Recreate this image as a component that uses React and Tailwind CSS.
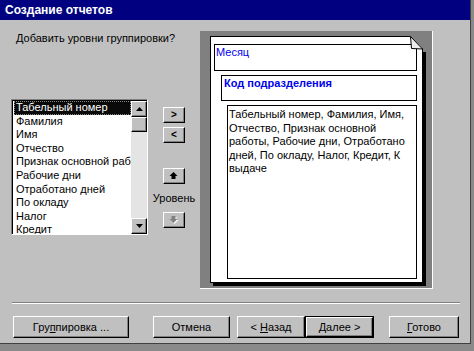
import React from 'react';

const items = [
  'Табельный номер',
  'Фамилия',
  'Имя',
  'Отчество',
  'Признак основной работы',
  'Рабочие дни',
  'Отработано дней',
  'По окладу',
  'Налог',
  'Кредит',
];

const bevel =
  'bg-[#c0c0c0] border border-t-white border-l-white border-r-black border-b-black shadow-[inset_-1px_-1px_0_#808080]';

function SmallButton({ children }) {
  return (
    <div className={`w-[22px] h-[16px] flex items-center justify-center ${bevel}`}>
      {children}
    </div>
  );
}

function Arrow({ up, disabled }) {
  return (
    <svg width="10" height="9" viewBox="0 0 10 9">
      {disabled && (
        <polygon points="5.5,8 9.5,4 7.5,4 7.5,1 3.5,1 3.5,4 1.5,4" fill="#ffffff" />
      )}
      <polygon
        points={up ? '4.5,0 8.5,4 6.5,4 6.5,7 2.5,7 2.5,4 0.5,4' : '4.5,7 8.5,3 6.5,3 6.5,0 2.5,0 2.5,3 0.5,3'}
        fill={disabled ? '#808080' : '#000000'}
      />
    </svg>
  );
}

function ScrollArrow({ up }) {
  return (
    <div className={`w-[16px] h-[16px] flex items-center justify-center ${bevel}`}>
      <svg width="7" height="4" viewBox="0 0 7 4">
        <polygon points={up ? '3.5,0 7,4 0,4' : '0,0 7,0 3.5,4'} fill="#000" />
      </svg>
    </div>
  );
}

function Button({ children, className = '', isDefault }) {
  if (isDefault) {
    return (
      <div className={`h-[22px] border border-black ${className}`}>
        <div className={`h-full flex items-center justify-center ${bevel}`}>{children}</div>
      </div>
    );
  }
  return (
    <div className={`h-[22px] flex items-center justify-center ${bevel} ${className}`}>{children}</div>
  );
}

export default function App() {
  return (
    <div
      className="w-[474px] h-[351px] bg-[#8a8a8a] overflow-hidden text-[11px] text-black"
      style={{ fontFamily: '"Liberation Sans", Arial, sans-serif' }}
    >
      <div className="w-[471px] h-[344px] bg-[#c0c0c0] border-r border-b border-r-[#404040] border-b-[#404040] flex flex-col">
        <div className="h-[20px] bg-[#000080] text-white font-bold text-[12px] pl-[5px] flex items-center">
          Создание отчетов
        </div>

        <div className="flex pt-[11px]">
          <div className="w-[200px] pl-[11px] flex flex-col">
            <div className="ml-[5px] h-[14px] leading-[14px]">Добавить уровни группировки?</div>

            <div className="flex mt-[54px]">
              <div className="w-[137px] h-[136px] flex border border-t-[#808080] border-l-[#808080] border-r-white border-b-white">
                <div className="flex flex-1 min-w-0 overflow-hidden shadow-[inset_1px_1px_0_#000] pt-[1px] pl-[1px]">
                  <div className="flex-1 min-w-0 bg-white overflow-hidden pl-[1px]">
                    {items.map((t, i) => (
                      <div
                        key={t}
                        className={`h-[13.6px] leading-[13.6px] whitespace-nowrap pl-[2px] ${
                          i === 0 ? 'bg-[#0a0a0a] text-white outline-dotted outline-1 outline-[#888] -outline-offset-1' : ''
                        }`}
                      >
                        {t}
                      </div>
                    ))}
                  </div>
                  <div className="w-[16px] shrink-0 flex flex-col bg-[#e4e4e4]">
                    <ScrollArrow up />
                    <div className={`w-[16px] h-[15px] ${bevel}`} />
                    <div className="flex-1" />
                    <ScrollArrow />
                  </div>
                </div>
              </div>

              <div className="w-[44px] ml-[4px] flex flex-col items-center">
                <div className="mt-[8px]">
                  <SmallButton>
                    <span className="font-bold text-[10px] leading-none">&gt;</span>
                  </SmallButton>
                </div>
                <div className="mt-[4px]">
                  <SmallButton>
                    <span className="font-bold text-[10px] leading-none">&lt;</span>
                  </SmallButton>
                </div>
                <div className="mt-[25px]">
                  <SmallButton>
                    <Arrow up />
                  </SmallButton>
                </div>
                <div className="mt-[7px] h-[14px] leading-[14px] whitespace-nowrap">Уровень</div>
                <div className="mt-[7px]">
                  <SmallButton>
                    <Arrow disabled />
                  </SmallButton>
                </div>
              </div>
            </div>
          </div>

          <div className="w-[233px] h-[258px] bg-[#808080] border-r border-b border-r-white border-b-white pl-[10px] pt-[5px]">
            <div className="relative w-[213px] h-[247px] bg-white border border-black shadow-[3px_3px_0_#000] flex flex-col">
              <svg className="absolute -top-[1px] -right-[4px]" width="16" height="16" viewBox="0 0 16 16">
                <polygon points="0,0 16,0 16,16 13,16 13,13" fill="#808080" />
                <polygon points="0.5,0.5 1.5,12.5 12.5,13" fill="#ececec" stroke="#000" strokeWidth="1" />
              </svg>

              <div className="ml-[3px] mt-[7px] w-[203px] h-[27px] border border-black text-[#0000ee] leading-[14px] pl-[1px]">
                Месяц
              </div>
              <div className="ml-[10px] mt-[4px] w-[196px] h-[26px] border border-black text-[#0000ee] font-bold leading-[14px] pl-[2px]">
                Код подразделения
              </div>
              <div className="ml-[16px] mt-[4px] w-[190px] h-[174px] border border-black leading-[13.5px] pl-[1px] pt-[2px] whitespace-nowrap">
                Табельный номер, Фамилия, Имя,
                <br />
                Отчество, Признак основной
                <br />
                работы, Рабочие дни, Отработано
                <br />
                дней, По окладу, Налог, Кредит, К
                <br />
                выдаче
              </div>
            </div>
          </div>
        </div>

        <div className="ml-[12px] mt-[13px] w-[448px] h-[2px] border-t border-t-[#808080] border-b border-b-white" />

        <div className="flex mt-[12px] pl-[13px]">
          <Button className="w-[116px]">
            <span>
              Гру<u>п</u>пировка ...
            </span>
          </Button>
          <Button className="w-[77px] ml-[24px]">Отмена</Button>
          <Button className="w-[68px] ml-[7px]">
            <span>
              &lt; <u>Н</u>азад
            </span>
          </Button>
          <Button className="w-[69px]" isDefault>
            <span>
              <u>Д</u>алее &gt;
            </span>
          </Button>
          <Button className="w-[70px] ml-[15px]">
            <span>
              <u>Г</u>отово
            </span>
          </Button>
        </div>
      </div>
    </div>
  );
}
